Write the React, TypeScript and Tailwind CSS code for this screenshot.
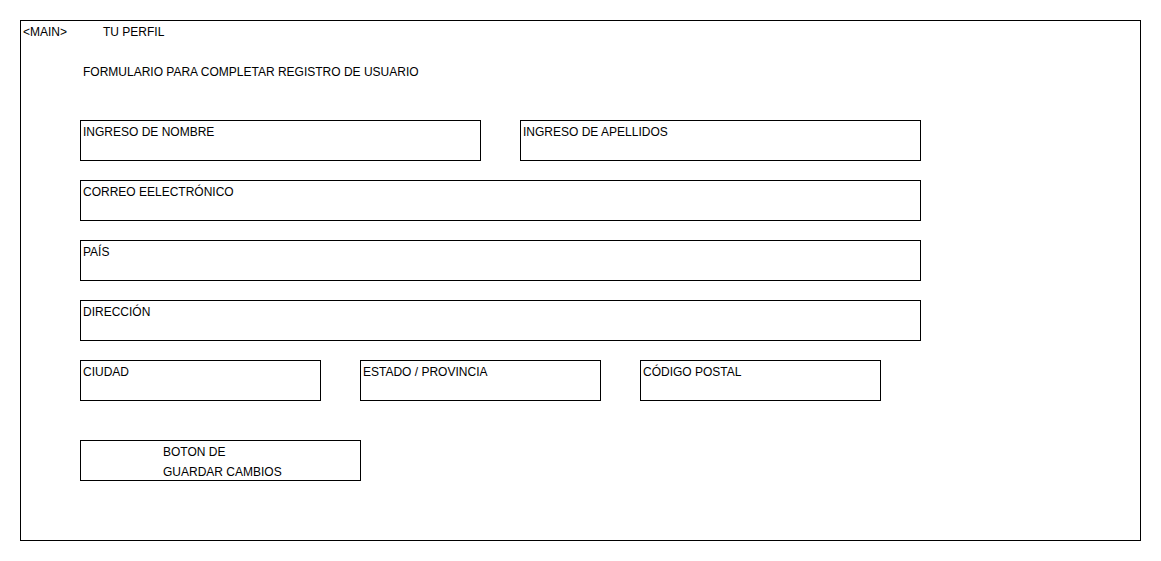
import React from 'react';

const font = { fontFamily: '"Liberation Sans", Arial, sans-serif' };

function Field({ label, w }: { label: string; w: string }) {
  return (
    <div className={`${w} h-[41px] border border-black pl-[2px] pt-[1px] text-[12px] leading-[20px] text-black`}>
      {label}
    </div>
  );
}

export default function App() {
  return (
    <div className="w-[1161px] h-[561px] bg-white pt-[20px] pl-[20px]" style={font}>
      <div className="w-[1121px] h-[521px] border border-black flex flex-col text-[12px] leading-[20px] text-black">
        {/* header */}
        <div className="h-[20px] flex pl-[2px] pt-[1px]">
          <span className="w-[80px]">&lt;MAIN&gt;</span>
          <span>TU PERFIL</span>
        </div>

        <div className="h-[20px] mt-[20px] pl-[62px] pt-[1px]">FORMULARIO PARA COMPLETAR REGISTRO DE USUARIO</div>

        <div className="pl-[59px] mt-[39px] flex flex-col gap-[19px]">
          <div className="flex gap-[39px]">
            <Field label="INGRESO DE NOMBRE" w="w-[401px]" />
            <Field label="INGRESO DE APELLIDOS" w="w-[401px]" />
          </div>
          <Field label="CORREO EELECTRÓNICO" w="w-[841px]" />
          <Field label="PAÍS" w="w-[841px]" />
          <Field label="DIRECCIÓN" w="w-[841px]" />
          <div className="flex gap-[39px]">
            <Field label="CIUDAD" w="w-[241px]" />
            <Field label="ESTADO / PROVINCIA" w="w-[241px]" />
            <Field label="CÓDIGO POSTAL" w="w-[241px]" />
          </div>
          <button className="mt-[20px] w-[281px] h-[41px] border border-black pl-[82px] pt-[1px] text-left text-[12px] leading-[20px] text-black bg-white flex flex-col items-start">
            <span>BOTON DE</span>
            <span>GUARDAR CAMBIOS</span>
          </button>
        </div>
      </div>
    </div>
  );
}
